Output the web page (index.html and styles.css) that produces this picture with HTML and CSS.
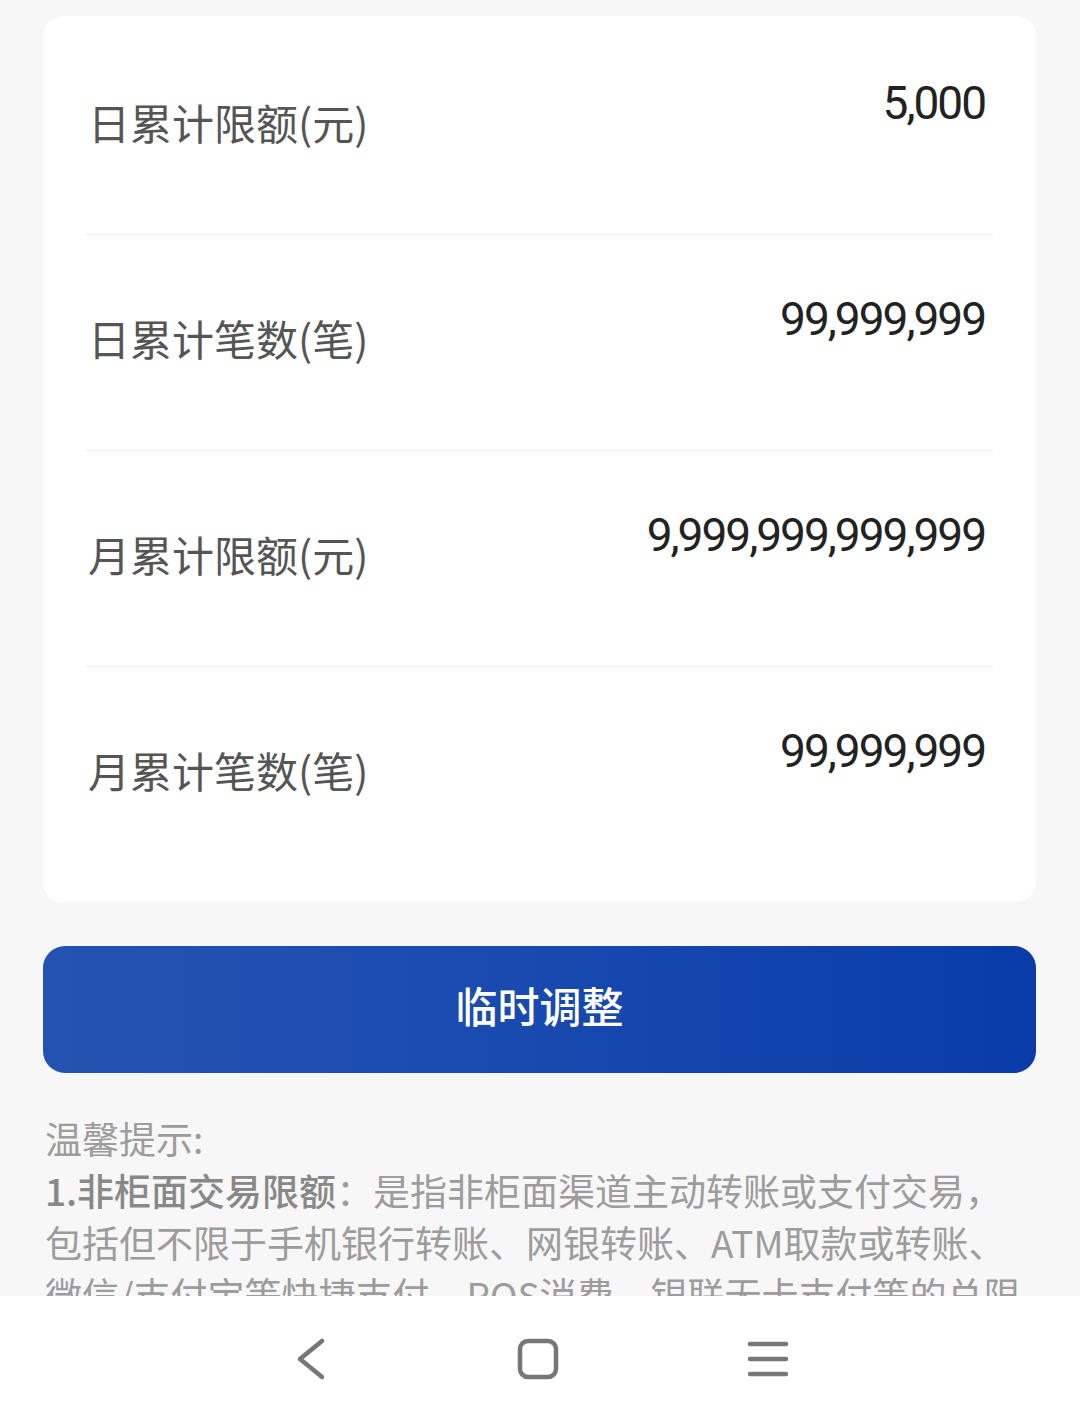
FILE: index.html
```html
<!DOCTYPE html>
<html lang="zh-CN">
<head>
<meta charset="utf-8">
<title>限额</title>
<link rel="stylesheet" href="styles.css">
</head>
<body>
<div class="page">
  <div class="card">
    <div class="row">
      <div class="label">日累计限额(元)</div>
      <div class="value">5,000</div>
    </div>
    <div class="row">
      <div class="label">日累计笔数(笔)</div>
      <div class="value">99,999,999</div>
    </div>
    <div class="row">
      <div class="label">月累计限额(元)</div>
      <div class="value">9,999,999,999,999</div>
    </div>
    <div class="row last">
      <div class="label">月累计笔数(笔)</div>
      <div class="value">99,999,999</div>
    </div>
  </div>
  <button class="btn">临时调整</button>
  <div class="tips">
    <div class="tip-title">温馨提示:</div>
    <div class="tip-body"><span class="strong">1.非柜面交易限额</span>：是指非柜面渠道主动转账或支付交易，<br>包括但不限于手机银行转账、网银转账、ATM取款或转账、<br>微信/支付宝等快捷支付、POS消费、银联无卡支付等的总限<br>额。</div>
  </div>
</div>
<nav class="navbar">
  <svg class="nav-icon" width="40" height="44" viewBox="0 0 40 44"><path d="M32 4 L10 22 L32 40" fill="none" stroke="#777" stroke-width="4.5" stroke-linecap="round" stroke-linejoin="round"/></svg>
  <svg class="nav-icon" width="44" height="44" viewBox="0 0 44 44"><rect x="4" y="4" width="36" height="36" rx="8" fill="none" stroke="#777" stroke-width="4.5"/></svg>
  <svg class="nav-icon" width="44" height="44" viewBox="0 0 44 44"><path d="M4 7 H40 M4 22 H40 M4 37 H40" fill="none" stroke="#777" stroke-width="4.5" stroke-linecap="round"/></svg>
</nav>
</body>
</html>
```
FILE: styles.css
```css
html, body {
  margin: 0;
  padding: 0;
  background: #f7f7f7;
  overflow: hidden;
  height: 1421px;
}
body {
  font-family: "Noto Sans CJK SC", "Noto Sans", sans-serif;
}
.page {
  padding: 16px 44px 0 43px;
}
.card {
  background: #ffffff;
  border-radius: 20px;
  padding: 3px 43px 20px 43px;
}
.row {
  height: 215px;
  border-bottom: 1px solid #ececec;
  display: flex;
  justify-content: space-between;
  align-items: flex-start;
}
.row.last {
  border-bottom: none;
}
.label {
  margin-top: 82px;
  margin-left: 2px;
  font-size: 42px;
  line-height: 42px;
  color: #555555;
}
.value {
  margin-top: 61px;
  margin-right: 8px;
  font-family: Roboto, "Noto Sans", sans-serif;
  font-size: 46px;
  line-height: 46px;
  letter-spacing: -2px;
  color: #222222;
}
.btn {
  display: block;
  width: 100%;
  height: 127px;
  margin-top: 44px;
  border: none;
  border-radius: 22px;
  background: linear-gradient(90deg, #2553b2 0%, #1b4cb0 40%, #0a3ca9 100%);
  color: #ffffff;
  font-family: "Noto Sans CJK SC", sans-serif;
  font-size: 42px;
  line-height: 42px;
  font-weight: 500;
  padding: 0 0 10px 0;
}
.tips {
  margin-top: 39px;
  margin-left: 2px;
  font-size: 37px;
  line-height: 52px;
  color: #9c9c9c;
}
.tip-body {
  white-space: nowrap;
}
.strong {
  font-weight: 500;
  color: #888888;
}
.navbar {
  position: fixed;
  left: 0;
  right: 0;
  bottom: 0;
  height: 125px;
  background: #ffffff;
  display: flex;
  align-items: center;
  justify-content: center;
  gap: 186px;
}
.nav-icon {
  display: block;
}
```
